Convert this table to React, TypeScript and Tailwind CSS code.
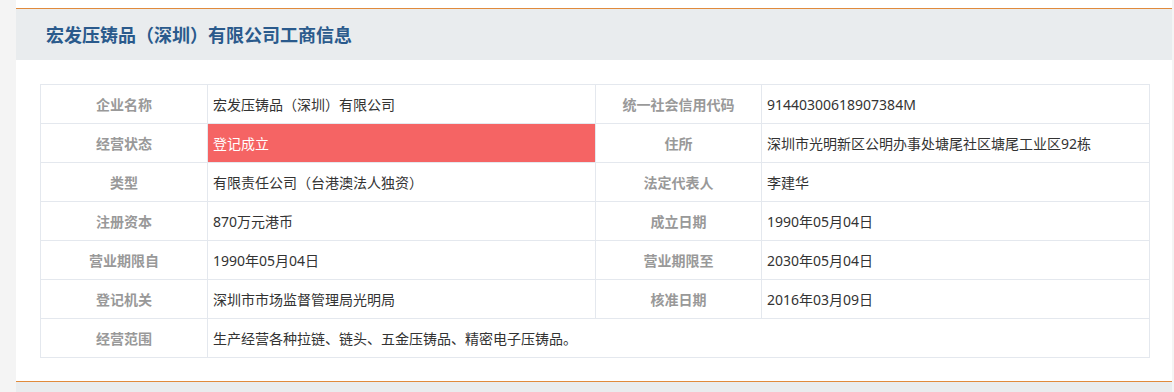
import React from 'react';

const rows: [string, string, string, string][] = [
  ['企业名称', '宏发压铸品（深圳）有限公司', '统一社会信用代码', '91440300618907384M'],
  ['经营状态', '登记成立', '住所', '深圳市光明新区公明办事处塘尾社区塘尾工业区92栋'],
  ['类型', '有限责任公司（台港澳法人独资）', '法定代表人', '李建华'],
  ['注册资本', '870万元港币', '成立日期', '1990年05月04日'],
  ['营业期限自', '1990年05月04日', '营业期限至', '2030年05月04日'],
  ['登记机关', '深圳市市场监督管理局光明局', '核准日期', '2016年03月09日'],
];

const font = { fontFamily: '"Noto Sans", "Noto Sans CJK SC", sans-serif' };

const App: React.FC = () => {
  const labelCls = 'h-[39px] p-0 border border-[#e4e8ee] text-center text-[14px] font-bold text-[#999]';
  const valueCls = 'h-[39px] py-0 border border-[#e4e8ee] px-[5px] text-left text-[14px] text-[#333]';

  return (
    <div className="flex w-[1174px] h-[392px] overflow-hidden bg-[#f4f4f4]" style={font}>
      <div className="w-[16px] shrink-0" />
      <div className="w-[1156px] shrink-0 bg-white flex flex-col">
        <div className="h-[8px]" />
        <div className="h-[52px] border-t border-[#e08a3c] bg-[#e9ecee] flex items-center pl-[30px]">
          <h2 className="text-[18px] font-bold text-[#2a5a8c]" style={{ fontFamily: '"Noto Sans CJK SC", sans-serif' }}>
            宏发压铸品（深圳）有限公司工商信息
          </h2>
        </div>
        <div className="pt-[24px] pl-[24px] h-[321px]">
          <table className="border-collapse table-fixed w-[1109px]">
            <colgroup>
              <col className="w-[167px]" />
              <col className="w-[388px]" />
              <col className="w-[166px]" />
              <col className="w-[388px]" />
            </colgroup>
            <tbody>
              {rows.map((r, i) => (
                <tr key={i}>
                  <td className={labelCls}>{r[0]}</td>
                  <td className={i === 1 ? valueCls + ' bg-[#f56464] !text-white' : valueCls}>{r[1]}</td>
                  <td className={labelCls}>{r[2]}</td>
                  <td className={valueCls}>{r[3]}</td>
                </tr>
              ))}
              <tr>
                <td className={labelCls}>经营范围</td>
                <td className={valueCls} colSpan={3}>生产经营各种拉链、链头、五金压铸品、精密电子压铸品。</td>
              </tr>
            </tbody>
          </table>
        </div>
        <div className="flex-1 border-t border-[#e08a3c] bg-[#e9ecee]" />
      </div>
    </div>
  );
};

export default App;
